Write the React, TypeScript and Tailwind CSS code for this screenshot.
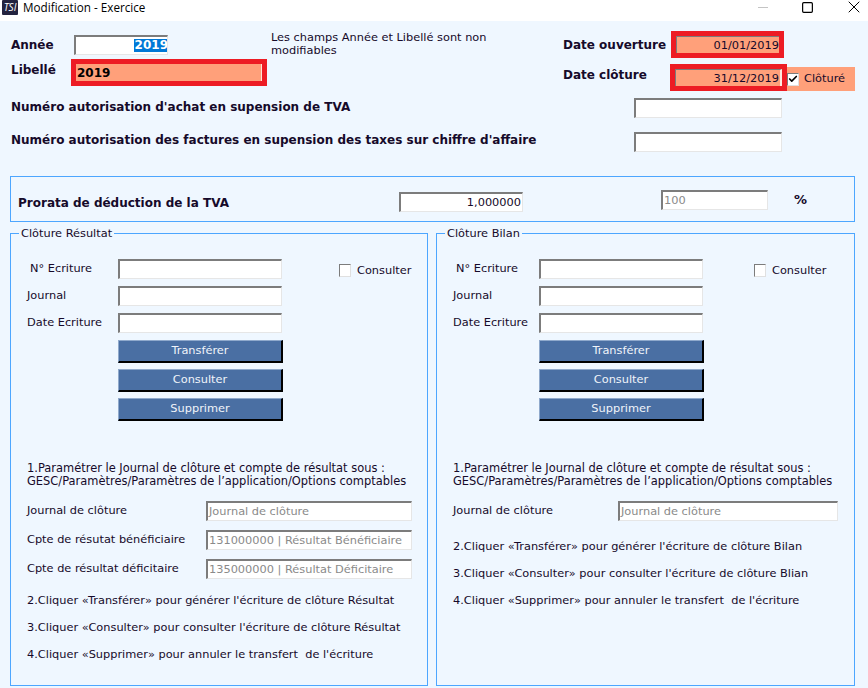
import type { ReactNode } from 'react';
import { Check, Square, X } from 'lucide-react';
import clsx from 'clsx';

const bevel = 'border-t-2 border-l-2 border-r border-b border-t-[#7c7c7c] border-l-[#7c7c7c] border-r-[#e6e6e6] border-b-[#e6e6e6]';

function Field({ className, value, muted }: { className?: string; value?: string; muted?: boolean }) {
  return (
    <div
      className={clsx(
        'h-5 shrink-0 flex items-center px-px bg-white whitespace-nowrap overflow-hidden',
        bevel,
        muted && 'text-[#8a8a8a]',
        className
      )}
    >
      {value}
    </div>
  );
}

function RedField({ className, inner, children }: { className?: string; inner?: string; children: ReactNode }) {
  return (
    <div className={clsx('h-[27px] shrink-0 border-[5px] border-[#ed1c24] bg-[#ffa07a]', className)}>
      <div className={clsx('h-full flex items-center', inner)}>{children}</div>
    </div>
  );
}

function Tick({ checked }: { checked?: boolean }) {
  return (
    <div className={clsx('w-3 h-[13px] shrink-0 bg-white flex items-center justify-center', 'border-t border-l border-[#7c7c7c] border-r border-b border-r-[#e0e0e0] border-b-[#e0e0e0]')}>
      {checked && <Check size={10} strokeWidth={4} className="text-black" />}
    </div>
  );
}

function ActionButton({ label }: { label: string }) {
  return (
    <button className="block w-[165px] h-[23px] bg-[#4a6fa3] text-[#f0f4fa] border-t border-l border-t-[#8fa9cc] border-l-[#8fa9cc] border-r-2 border-b-2 border-r-black border-b-black">
      {label}
    </button>
  );
}

interface PanelProps {
  title: string;
  className: string;
  labelWidth: string;
  checkGap: string;
  lowerLabelWidth: string;
  lowerInputWidth: string;
  stepsTop: string;
  lower: { label: string; value: string }[];
  steps: string[];
}

function Panel({ title, className, labelWidth, checkGap, lowerLabelWidth, lowerInputWidth, stepsTop, lower, steps }: PanelProps) {
  return (
    <fieldset className={clsx('h-[459px] border border-[#4da6ff] pl-[16px]', className)}>
      <legend className="-ml-[8px] px-[2px] leading-[13px]">{title}</legend>

      <div className="flex mt-[19px]">
        <div className="flex flex-col gap-[7px]">
          {['N° Ecriture', 'Journal', 'Date Ecriture'].map((label, i) => (
            <div key={label} className="flex items-center">
              <div className={clsx(labelWidth, i === 0 && 'pl-[3px]')}>{label}</div>
              <Field className="w-[164px]" />
            </div>
          ))}
          <div className="flex flex-col gap-[6px]">
            {['Transférer', 'Consulter', 'Supprimer'].map((label) => (
              <div key={label} className="flex">
                <div className={labelWidth} />
                <ActionButton label={label} />
              </div>
            ))}
          </div>
        </div>
        <div className={clsx('flex items-center gap-[6px] h-[13px] mt-[5px] whitespace-nowrap', checkGap)}>
          <Tick />
          <span>Consulter</span>
        </div>
      </div>

      <p className="mt-[41px] leading-[13px] text-[11.45px] whitespace-nowrap">
        1.Paramétrer le Journal de clôture et compte de résultat sous :
        <br />
        GESC/Paramètres/Paramètres de l’application/Options comptables
      </p>

      <div className="mt-[13px] flex flex-col gap-[9px]">
        {lower.map((row) => (
          <div key={row.label} className="flex items-center">
            <div className={lowerLabelWidth}>{row.label}</div>
            <Field className={lowerInputWidth} value={row.value} muted />
          </div>
        ))}
      </div>

      <div className={clsx('flex flex-col gap-[14px] leading-[13px]', stepsTop)}>
        {steps.map((step) => (
          <div key={step} className="whitespace-pre">{step}</div>
        ))}
      </div>
    </fieldset>
  );
}

export default function App() {
  return (
    <div className="w-[868px] h-[688px] overflow-hidden bg-[#eff7ff] text-[#160a2a] text-[11.35px] font-['DejaVu_Sans',sans-serif]">
      {/* Title bar */}
      <div className="h-[21px] bg-white flex items-start font-['Open_Sans',sans-serif] text-[11.7px] text-black">
        <div className="ml-[2px] w-[16px] h-[15px] rounded-[1px] bg-[#23233f] text-white text-[10px] leading-[15px] text-center italic">TSI</div>
        <span className="ml-[5px] leading-[15px]">Modification - Exercice</span>
        <div className="ml-auto flex items-start">
          <div className="mt-[7px] w-[10px] h-px bg-[#c4c4c4]" />
          <Square size={13} strokeWidth={2.2} className="ml-[33px] mt-[1px]" />
          <X size={20} strokeWidth={1.2} className="ml-[30px] mr-[4px] -mt-[3px]" />
        </div>
      </div>

      {/* Year, label and dates */}
      <div className="flex pt-[10px]">
        <div className="w-[260px] ml-[11px] text-[12px] font-bold">
          <div className="flex items-center h-5 mt-[4px]">
            <div className="w-[63px]">Année</div>
            <div className={clsx('w-[94px] h-5 flex items-center justify-end bg-white overflow-hidden', bevel)}>
              <span className="-mr-[2px] bg-[#0078d7] text-white leading-[13px] pl-px border-r border-r-[#e8912c]">2019</span>
            </div>
          </div>
          <div className="flex mt-[4px]">
            <div className="w-[60px] h-[22px] flex items-center">Libellé</div>
            <RedField className="w-[196px]" inner="pl-[1px] border-r border-r-[#ffe3d6] text-black">2019</RedField>
          </div>
        </div>

        <p className="w-[260px] leading-[13px] whitespace-nowrap">
          Les champs Année et Libellé sont non
          <br />
          modifiables
        </p>

        <div className="ml-[32px]">
          <div className="flex items-center">
            <div className="w-[108px] text-[12px] font-bold whitespace-nowrap">Date ouverture</div>
            <RedField className="w-[113px]" inner="justify-end border-t border-l border-t-[#7c7c7c] border-l-[#7c7c7c]">01/01/2019</RedField>
          </div>
          <div className="flex mt-[6px]">
            <div className="w-[107px] h-[22px] flex items-center text-[12px] font-bold whitespace-nowrap">Date clôture</div>
            <RedField className="w-[117px]" inner="justify-end pr-[1px] border-t border-l border-r-2 border-t-[#7c7c7c] border-l-[#7c7c7c] border-r-[#ffe9df]">31/12/2019</RedField>
            <div className="w-[68px] h-6 self-end flex items-center gap-[5px] bg-[#ffa07a]">
              <Tick checked />
              <span>Clôturé</span>
            </div>
          </div>
        </div>
      </div>

      {/* Authorisation numbers */}
      <div className="flex items-center h-5 mt-[7px] ml-[11px]">
        <div className="w-[623px] pb-[2px] text-[12px] font-bold">Numéro autorisation d'achat en supension de TVA</div>
        <Field className="w-[148px]" />
      </div>
      <div className="flex items-center h-5 mt-[14px] ml-[11px]">
        <div className="w-[623px] pb-[4px] text-[12px] font-bold">Numéro autorisation des factures en supension des taxes sur chiffre d'affaire</div>
        <Field className="w-[148px]" />
      </div>

      {/* VAT prorata */}
      <div className="flex items-center ml-[10px] mt-[24px] w-[845px] h-[46px] border border-[#4da6ff] pl-[7px] pt-[6px]">
        <div className="w-[381px] pt-[2px] text-[12px] font-bold">Prorata de déduction de la TVA</div>
        <Field className="w-[124px] justify-end" value="1,000000" />
        <Field className="ml-[138px] mb-[4px] w-[107px]" value="100" muted />
        <div className="ml-[26px] mb-[4px] text-[13px] font-bold">%</div>
      </div>

      {/* Closing panels */}
      <div className="flex gap-[8px] ml-[10px] mt-[5px]">
        <Panel
          title="Clôture Résultat"
          className="w-[418px]"
          labelWidth="w-[91px]"
          checkGap="ml-[56px]"
          lowerLabelWidth="w-[179px]"
          lowerInputWidth="w-[206px]"
          stepsTop="mt-[15px]"
          lower={[
            { label: 'Journal de clôture', value: 'Journal de clôture' },
            { label: 'Cpte de résutat bénéficiaire', value: '131000000 | Résultat Bénéficiaire' },
            { label: 'Cpte de résultat déficitaire', value: '135000000 | Résultat Déficitaire' },
          ]}
          steps={[
            "2.Cliquer «Transférer» pour générer l'écriture de clôture Résultat",
            "3.Cliquer «Consulter» pour consulter l'écriture de clôture Résultat",
            "4.Cliquer «Supprimer» pour annuler le transfert  de l'écriture",
          ]}
        />
        <Panel
          title="Clôture Bilan"
          className="w-[419px]"
          labelWidth="w-[86px]"
          checkGap="ml-[50px]"
          lowerLabelWidth="w-[165px]"
          lowerInputWidth="w-[220px]"
          stepsTop="mt-[19px]"
          lower={[{ label: 'Journal de clôture', value: 'Journal de clôture' }]}
          steps={[
            "2.Cliquer «Transférer» pour générer l'écriture de clôture Bilan",
            "3.Cliquer «Consulter» pour consulter l'écriture de clôture Blian",
            "4.Cliquer «Supprimer» pour annuler le transfert  de l'écriture",
          ]}
        />
      </div>
    </div>
  );
}
